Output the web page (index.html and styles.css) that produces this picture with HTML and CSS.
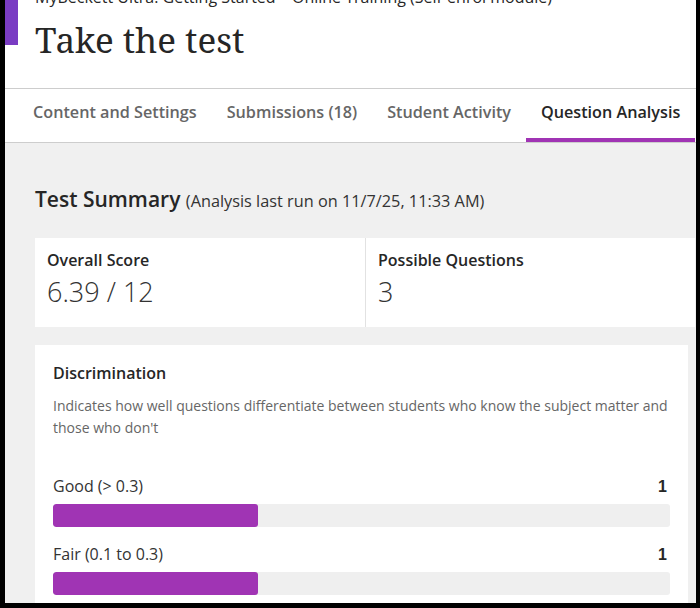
FILE: index.html
```html
<!DOCTYPE html>
<html lang="en">
<head>
<meta charset="utf-8">
<title>Take the test</title>
<link rel="stylesheet" href="styles.css">
</head>
<body>
<div class="frame">
  <header class="page-header">
    <div class="course-stripe"></div>
    <div class="header-text">
      <div class="breadcrumb">MyBeckett Ultra: Getting Started – Online Training (Self-enrol module)</div>
      <h1 class="title">Take the test</h1>
    </div>
  </header>
  <nav class="tabs">
    <a class="tab">Content and Settings</a>
    <a class="tab">Submissions (18)</a>
    <a class="tab">Student Activity</a>
    <a class="tab active">Question Analysis</a>
  </nav>
  <main class="content">
    <h2 class="summary-heading">Test Summary <span class="run-info">(Analysis last run on 11/7/25, 11:33 AM)</span></h2>
    <div class="summary-row">
      <div class="summary-card">
        <div class="card-label">Overall Score</div>
        <div class="card-value">6.39 / 12</div>
      </div>
      <div class="summary-card divided">
        <div class="card-label">Possible Questions</div>
        <div class="card-value">3</div>
      </div>
    </div>
    <section class="disc-card">
      <h3 class="disc-title">Discrimination</h3>
      <p class="disc-desc">Indicates how well questions differentiate between students who know the subject matter and those who don't</p>
      <div class="metric">
        <div class="metric-head"><span>Good (&gt; 0.3)</span><span class="metric-count">1</span></div>
        <div class="bar"><div class="bar-fill" style="width:33.3%"></div></div>
      </div>
      <div class="metric">
        <div class="metric-head"><span>Fair (0.1 to 0.3)</span><span class="metric-count">1</span></div>
        <div class="bar"><div class="bar-fill" style="width:33.3%"></div></div>
      </div>
    </section>
  </main>
</div>
</body>
</html>
```
FILE: styles.css
```css
html, body {
  margin: 0;
  padding: 0;
  background: #000;
}
body {
  width: 700px;
  height: 608px;
  overflow: hidden;
  font-family: "Open Sans", "Noto Sans", sans-serif;
  color: #262626;
}
.frame {
  margin-left: 5px;
  width: 691px;
  height: 603px;
  overflow: hidden;
  background: #f0f0f0;
  display: flex;
  flex-direction: column;
}
.page-header {
  display: flex;
  align-items: flex-start;
  background: #fff;
  border-bottom: 1px solid #cdcdcd;
  height: 88px;
  flex: none;
}
.course-stripe {
  width: 13px;
  height: 45px;
  background: #7a3cc3;
  flex: none;
}
.header-text {
  margin-top: -14px;
  padding-left: 17px;
}
.breadcrumb {
  font-size: 16px;
  line-height: 22px;
  white-space: nowrap;
  color: #262626;
}
.title {
  margin: 10px 0 0;
  font-family: "Noto Serif", "DejaVu Serif", serif;
  font-weight: 400;
  font-size: 35px;
  line-height: 44px;
  color: #262626;
}
.tabs {
  display: flex;
  background: #fff;
  border-bottom: 1px solid #cdcdcd;
  padding-left: 13px;
  flex: none;
}
.tab {
  padding: 12px 15px 15px;
  border-bottom: 4px solid transparent;
  font-size: 16.2px;
  line-height: 22px;
  font-weight: 600;
  color: #666;
  white-space: nowrap;
}
.tab.active {
  color: #262626;
  border-bottom-color: #a034b4;
}
.content {
  padding: 42px 0 0 30px;
}
.summary-heading {
  margin: 0;
  font-size: 21px;
  line-height: 28px;
  font-weight: 600;
  color: #262626;
  white-space: nowrap;
}
.run-info {
  font-size: 16.3px;
  font-weight: 400;
  color: #333;
}
.summary-row {
  display: flex;
  margin-top: 23px;
}
.summary-card {
  width: 330px;
  flex: none;
  box-sizing: border-box;
  background: #fff;
  padding: 11px 12px 14px;
}
.summary-card.divided {
  border-left: 1px solid #e2e2e2;
}
.card-label {
  font-size: 16px;
  line-height: 22px;
  font-weight: 600;
  color: #262626;
}
.card-value {
  margin-top: 3px;
  font-size: 27px;
  line-height: 36px;
  font-weight: 300;
  color: #333;
  padding-bottom: 3px;
}
.disc-card {
  margin-top: 18px;
  width: 653px;
  box-sizing: border-box;
  background: #fff;
  padding: 17px 18px 20px;
}
.disc-title {
  margin: 0;
  font-size: 16px;
  line-height: 22px;
  font-weight: 600;
  color: #262626;
}
.disc-desc {
  margin: 11px 0 0;
  font-size: 14px;
  line-height: 22.4px;
  color: #666;
}
.metric {
  margin-top: 16px;
}
.disc-desc + .metric {
  margin-top: 35px;
}
.metric-head {
  display: flex;
  justify-content: space-between;
  align-items: baseline;
  font-size: 16px;
  line-height: 22px;
  color: #333;
}
.metric-count {
  font-family: "Liberation Sans", Arial, sans-serif;
  font-weight: 700;
  color: #262626;
  padding-right: 3px;
}
.bar {
  margin-top: 6px;
  height: 23px;
  background: #efefef;
  border-radius: 3px;
  overflow: hidden;
}
.bar-fill {
  height: 100%;
  background: #a034b4;
  border-radius: 3px;
}
```
